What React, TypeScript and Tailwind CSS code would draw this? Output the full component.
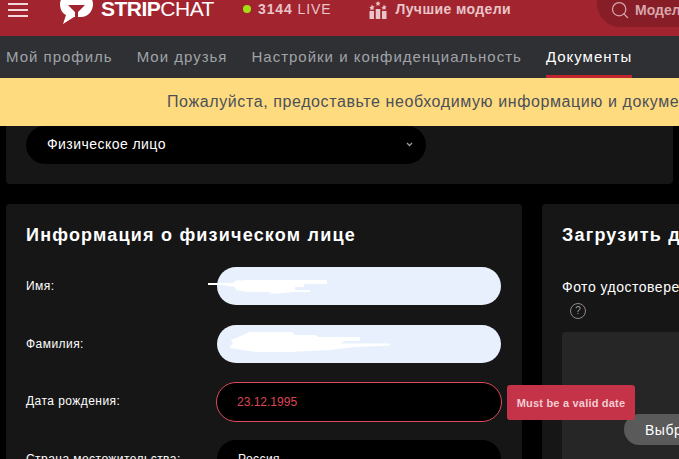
import { Search } from "lucide-react";

const tabs = [
  { label: "Мой профиль", active: false },
  { label: "Мои друзья", active: false },
  { label: "Настройки и конфиденциальность", active: false },
  { label: "Документы", active: true },
];

const Logo = () => (
  <svg width="33" height="24" viewBox="0 0 33 24" className="shrink-0 ml-[32px]">
    <path
      d="M9 -6H24C29 -6 33 -1 33 4C33 11 28 17 21 17H14L3 24L6 15C2 13 0 9 0 4C0 -1 4 -6 9 -6Z"
      fill="#fff"
    />
    <path d="M8 5H25L18 12V20H15V12Z" fill="#a2242f" />
  </svg>
);

const TopIcon = () => (
  <svg width="18" height="19" viewBox="0 0 18 19" className="shrink-0 ml-[38px]" fill="#e8c5c9">
    <rect x="0.5" y="11" width="4.500" height="8" />
    <rect x="6.750" y="9" width="4.500" height="10" />
    <rect x="13" y="11" width="4.500" height="8" />
    <path d="M3 4.500l.9 1.700 1.900.3-1.400 1.300.3 1.900L3 9.400l-1.700.8.300-1.900L.2 7l1.900-.3ZM15 4.500l.9 1.700 1.900.3-1.400 1.300.3 1.900-1.700-.8-1.700.8.3-1.900L12.200 7l1.900-.3ZM9 1l.8 1.600 1.800.2-1.300 1.300.3 1.800L9 5.100l-1.600.8.300-1.800-1.300-1.300 1.800-.2Z" />
  </svg>
);

const Field = ({ label, children }: { label: string; children: React.ReactNode }) => (
  <div className="flex items-center h-[38px] mb-[19.7px]">
    <label className="w-[191px] text-xs tracking-[0.45px] text-white shrink-0 whitespace-nowrap">{label}</label>
    {children}
  </div>
);

const App = () => {
  return (
    <div className="w-[679px] h-[459px] overflow-hidden bg-black font-['Liberation_Sans',Arial,sans-serif]">
      <header className="h-9 bg-[#a2242f] flex items-start overflow-hidden">
        <div className="ml-2 mt-[3px] w-5 shrink-0 flex flex-col gap-1">
          <span className="h-0.5 bg-[#f3d7da]" />
          <span className="h-0.5 bg-[#f3d7da]" />
          <span className="h-0.5 bg-[#f3d7da]" />
        </div>
        <Logo />
        <div className="ml-2 -mt-[2px] shrink-0 text-[21px] leading-none text-white tracking-[-0.5px] whitespace-nowrap">
          <span className="font-bold">STRIP</span>CHAT
        </div>
        <span className="ml-[29px] mt-[5px] w-2 h-2 rounded-full bg-[#a2e011] shrink-0" />
        <div className="ml-[7px] -mt-px shrink-0 text-sm tracking-[0.9px] text-[#e8c5c9] whitespace-nowrap">
          <span className="font-bold">3144</span> LIVE
        </div>
        <TopIcon />
        <div className="ml-2 -mt-px shrink-0 text-sm font-bold tracking-[0.4px] text-[#e8c5c9] whitespace-nowrap">
          Лучшие модели
        </div>
        <div className="ml-[86px] -mt-[20px] w-[200px] h-[47px] pt-[12px] shrink-0 rounded-l-[24px] bg-[#861d27] flex items-center pl-[13px] gap-[5px] text-sm font-bold text-[#d9a6ab]">
          <Search size={20} strokeWidth={1.5} />
          Модели
        </div>
      </header>

      <nav className="h-[42px] bg-[#2f3033] flex pl-[6px] gap-6 text-[15px] tracking-[1px] whitespace-nowrap">
        {tabs.map((t) => (
          <div
            key={t.label}
            className={
              t.active
                ? "h-full pt-[10px] text-white border-b-[3px] border-[#c3252f]"
                : "h-full pt-[10px] text-[#a0a4a9]"
            }
          >
            {t.label}
          </div>
        ))}
      </nav>

      <div className="h-[48px] bg-[#ffdb80] flex items-center pl-[167px] text-base tracking-[0.6px] text-[#4b5058] whitespace-nowrap overflow-hidden">
        Пожалуйста, предоставьте необходимую информацию и документы
      </div>

      <main className="px-[6px]">
        <section className="h-[58px] rounded-b-[4px] bg-[#161616] px-5">
          <div className="w-[400px] h-[38px] rounded-[19px] bg-black flex items-center justify-between pl-[21px] pr-[13px] pb-[2px] text-sm tracking-[0.45px] text-white">
            Физическое лицо
            <svg width="7" height="5" viewBox="0 0 7 5" fill="none" stroke="#999" strokeWidth="1.400">
              <path d="M1 1l2.500 2.500L6 1" />
            </svg>
          </div>
        </section>

        <div className="mt-5 flex gap-5">
          <section className="w-[516px] h-[300px] shrink-0 rounded-[4px] bg-[#161616] px-5 pt-[19px]">
            <h2 className="text-lg leading-6 font-bold tracking-[1.2px] text-white mb-[20px] whitespace-nowrap">
              Информация о физическом лице
            </h2>
            <Field label="Имя:">
              <div className="relative w-[284px] h-[38px] rounded-[19px] bg-[#e8f0fe]">
                <svg width="120" height="14" viewBox="0 0 120 14" className="absolute -left-[10px] top-[13px]" fill="#fff">
                  <path d="M1 3H26L29 0.500H37L38 0H120V4H97V7H88V10H103V12H85L72 13.500H64L62 12H40L29 10L28 7L15 5H1Z" />
                </svg>
              </div>
            </Field>
            <Field label="Фамилия:">
              <div className="relative w-[284px] h-[38px] rounded-[19px] bg-[#e8f0fe]">
                <svg width="160" height="20" viewBox="0 0 160 20" className="absolute left-[13px] top-[7px]" fill="#fff">
                  <path d="M20 0H62L65 3H85L88 5H130V9H115L110 11.500H160V13.500L125 15L100 18L60 20H25L0 16V14L3 12L1 8L6 6Z" />
                </svg>
              </div>
            </Field>
            <Field label="Дата рождения:">
              <div className="relative -ml-px mt-[2px] w-[286px] h-[40px] rounded-[20px] bg-black border border-[#dc4c5b] flex items-center pl-[20px] pb-px text-xs text-[#dc4655]">
                23.12.1995
                <div className="absolute left-[290px] top-[2px] w-[128px] h-[35px] rounded-[3px] bg-[#c43348] flex items-center justify-center text-[11px] font-bold tracking-[0.2px] text-[#f3ccd2] whitespace-nowrap z-10">
                  Must be a valid date
                </div>
              </div>
            </Field>
            <Field label="Страна местожительства:">
              <div className="w-[284px] h-[38px] rounded-[19px] bg-black flex items-center pl-[21px] text-xs tracking-[0.45px] text-white">
                Россия
              </div>
            </Field>
          </section>

          <section className="w-[300px] h-[300px] shrink-0 rounded-[4px] bg-[#161616] px-5 pt-[19px]">
            <h2 className="text-lg leading-6 font-bold tracking-[1.2px] text-white whitespace-nowrap">
              Загрузить документы
            </h2>
            <p className="mt-[32px] text-sm leading-4 tracking-[0.5px] text-white whitespace-nowrap">
              Фото удостоверения личности
            </p>
            <span className="mt-2 ml-2 w-4 h-4 rounded-full border border-[#8a8a8a] flex items-center justify-center text-[10px] leading-none text-[#9a9a9a]">
              ?
            </span>
            <div className="mt-[13px] h-[200px] rounded-t-[4px] bg-[#262626] pt-[82px] pl-[62px]">
              <div className="w-[120px] h-[31px] rounded-[16px] bg-[#5a5a5a] flex items-center pl-[21px] text-sm tracking-[0.5px] text-white whitespace-nowrap">
                Выбрать файл
              </div>
            </div>
          </section>
        </div>
      </main>
    </div>
  );
};

export default App;
